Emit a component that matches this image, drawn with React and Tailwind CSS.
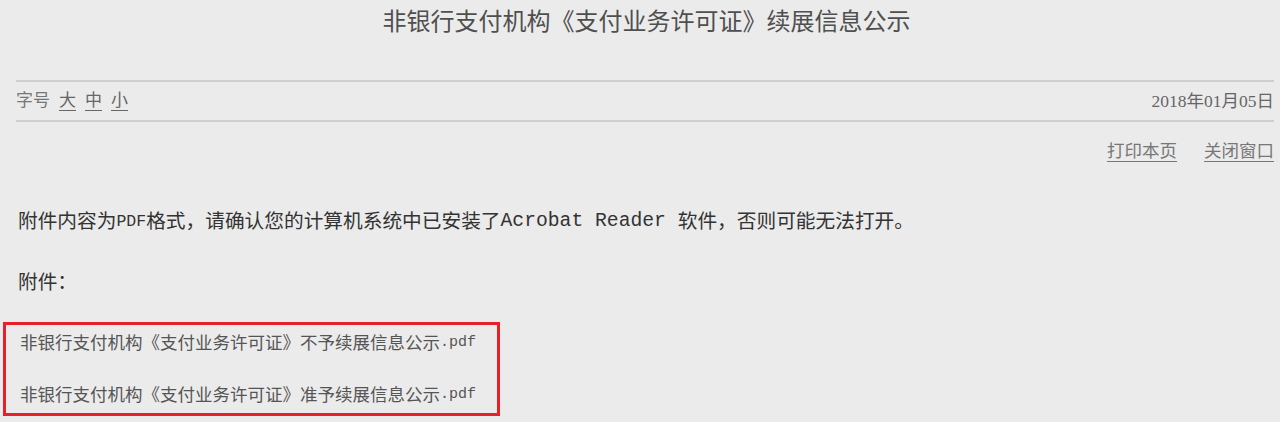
import React from 'react';

const font = { fontFamily: "'Liberation Serif', 'Noto Sans CJK SC', serif" };

// SimSun-style half-width latin
function Latin({ children, size = 'text-[16px]' }) {
  return (
    <span className={size} style={{ fontFamily: "'Liberation Mono', monospace" }}>
      {children}
    </span>
  );
}

export default function App() {
  const files = [
    '非银行支付机构《支付业务许可证》不予续展信息公示',
    '非银行支付机构《支付业务许可证》准予续展信息公示',
  ];

  return (
    <div className="w-[1280px] h-[422px] overflow-hidden bg-[#ebebeb]" style={font}>
      {/* title */}
      <h1 className="h-[44px] pl-[13px] flex items-center justify-center text-[24px] text-[#4f4f4f] font-normal mb-[36px]">
        非银行支付机构《支付业务许可证》续展信息公示
      </h1>

      {/* font size / date bar */}
      <div className="ml-4 mr-[6px] border-t-2 border-b-2 border-[#cfcfcf] h-[42px] flex items-center justify-between text-[#777]">
        <div className="flex items-center gap-[9px] text-[17px]">
          <span>字号</span>
          <a href="#" className="underline underline-offset-4 text-[#666]">大</a>
          <a href="#" className="underline underline-offset-4 text-[#666]">中</a>
          <a href="#" className="underline underline-offset-4 text-[#666]">小</a>
        </div>
        <span className="text-[17.5px] text-[#666]">2018年01月05日</span>
      </div>

      {/* actions */}
      <div className="mr-[6px] h-[58px] flex items-center justify-end gap-[27px] text-[17.5px] text-[#777]">
        <a href="#" className="underline underline-offset-4">打印本页</a>
        <a href="#" className="underline underline-offset-4">关闭窗口</a>
      </div>

      {/* notice */}
      <p className="ml-[18px] mt-[27px] h-[30px] flex items-center text-[19.7px] text-[#333] whitespace-pre">
        附件内容为<Latin size="text-[16.5px]">PDF</Latin>格式，请确认您的计算机系统中已安装了<Latin size="text-[19.7px]">Acrobat Reader </Latin>软件，否则可能无法打开。
      </p>
      <p className="ml-[18px] mt-[31px] h-[30px] flex items-center text-[19.7px] text-[#333]">
        附件：
      </p>

      {/* attachment list */}
      <div className="ml-[3px] mt-[24px] w-[497px] h-[94px] border-[3px] border-[#e8202a] flex flex-col justify-between pl-[14px] py-[3px]">
        {files.map((f) => (
          <a key={f} href="#" className="h-[30px] flex items-center text-[17.5px] text-[#555] whitespace-pre">
            {f}<Latin size="text-[15px]">.pdf</Latin>
          </a>
        ))}
      </div>
    </div>
  );
}
